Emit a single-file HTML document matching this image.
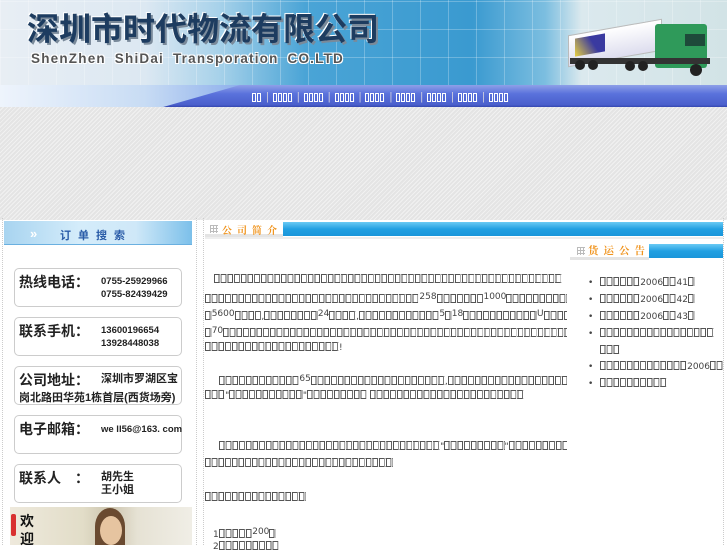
<!DOCTYPE html>
<html><head><meta charset="utf-8"><style>
*{margin:0;padding:0;box-sizing:border-box}
body{width:727px;height:545px;overflow:hidden;background:#fff;position:relative;font-family:"Liberation Sans","Noto Sans CJK SC",sans-serif}
.a{position:absolute}
.t{display:inline-block;height:9px;width:calc(var(--n)*6.7px);vertical-align:-1px;
background:linear-gradient(90deg,transparent 5.7px,#fff 5.7px) 0 0/6.7px 100% repeat-x,
linear-gradient(#555,#555) 0 0/100% 1px no-repeat,linear-gradient(#555,#555) 0 100%/100% 1px no-repeat,
repeating-linear-gradient(90deg,#555 0 1px,transparent 1px 4.7px,#555 4.7px 5.7px,transparent 5.7px 6.7px)}
.ln{position:absolute;left:205px;width:362px;overflow:hidden;white-space:nowrap;font-size:9px;color:#444;line-height:12px;font-family:"DejaVu Sans",sans-serif}
.ln span.d{font-size:9px;vertical-align:3px}
.rl{position:absolute;left:588px;width:135px;overflow:hidden;white-space:nowrap;font-size:9px;color:#444;line-height:12px;font-family:"DejaVu Sans",sans-serif}
.rl b{display:inline-block;width:12px;font-weight:normal}
.nv{display:inline-block;height:9px;width:calc(var(--n)*5px);margin:0 4px;vertical-align:middle;
background:linear-gradient(90deg,transparent 4px,#5570d8 4px) 0 0/5px 100% repeat-x,linear-gradient(#fff,#fff) 0 0/100% 1px no-repeat,linear-gradient(#fff,#fff) 0 100%/100% 1px no-repeat,repeating-linear-gradient(90deg,#fff 0 1px,transparent 1px 3px,#fff 3px 4px,transparent 4px 5px)}
.box{position:absolute;left:14px;width:168px;height:39px;border:1px solid #ccc;border-radius:5px;background:#fff}
.lb{position:absolute;left:4px;top:3px;font-size:14px;color:#222;font-weight:bold}
.vl{position:absolute;left:86px;top:6px;font-size:9.5px;font-weight:bold;color:#222;line-height:13px;white-space:nowrap}
</style></head><body>
<div class="a" style="left:0;top:0;width:727px;height:86px;background:linear-gradient(90deg,#e8eef4 0%,#dce8f2 20%,#a8d2ea 30%,#4aa4d6 42%,#3a9ad0 65%,#7cbee0 75%,#dbe9ee 80%,#d2e3e6 100%)"></div>
<div class="a" style="left:0;top:0;width:727px;height:86px;background:repeating-linear-gradient(90deg,rgba(255,255,255,.25) 0 1px,transparent 1px 28px),repeating-linear-gradient(0deg,rgba(255,255,255,.25) 0 1px,transparent 1px 28px)"></div>
<div class="a" style="left:27px;top:4px;font-size:32px;font-weight:bold;color:#1d3c60;text-shadow:2px 2px 0 #7a8a9a,-1px -1px 0 #fff;font-family:'Noto Sans CJK SC',sans-serif">深圳市时代物流有限公司</div>
<div class="a" style="left:31px;top:51px;font-size:13.5px;font-weight:bold;color:#555;letter-spacing:1.2px;word-spacing:4px;text-shadow:1px 1px 0 #fff,-1px -1px 0 #fff,1px -1px 0 #fff,-1px 1px 0 #fff">ShenZhen ShiDai Transporation CO.LTD</div>
<div class="a" style="left:568px;top:27px;width:94px;height:32px;background:linear-gradient(#fff,#dde);transform:skewY(-10deg);border:1px solid #bbb"></div>
<div class="a" style="left:575px;top:36px;width:30px;height:18px;background:linear-gradient(60deg,#e8d040,#3a3aa0 60%);transform:skewY(-10deg)"></div>
<div class="a" style="left:655px;top:24px;width:52px;height:44px;background:#2f9a5a;border-radius:3px"></div>
<div class="a" style="left:685px;top:34px;width:20px;height:12px;background:#1e4a3a"></div>
<div class="a" style="left:570px;top:58px;width:140px;height:6px;background:#333"></div>
<div class="a" style="left:575px;top:60px;width:10px;height:10px;border-radius:50%;background:#222"></div>
<div class="a" style="left:588px;top:60px;width:10px;height:10px;border-radius:50%;background:#222"></div>
<div class="a" style="left:625px;top:61px;width:10px;height:10px;border-radius:50%;background:#222"></div>
<div class="a" style="left:638px;top:61px;width:10px;height:10px;border-radius:50%;background:#222"></div>
<div class="a" style="left:690px;top:64px;width:12px;height:12px;border-radius:50%;background:#222"></div>
<div class="a" style="left:0;top:85px;width:727px;height:22px;background:linear-gradient(#8ea0e8,#5a72dc 40%,#4a5fcc 90%,#3446b0)"></div>
<div class="a" style="left:0;top:85px;width:240px;height:22px;background:linear-gradient(90deg,#eef4fc,#c8dcf4 60%,#8eb0ec);clip-path:polygon(0 0,100% 0,68% 100%,0 100%)"></div>
<div class="a" style="left:248px;top:91px;white-space:nowrap;color:#ccd;font-size:11px;line-height:12px"><span class="nv" style="--n:2"></span>|<span class="nv" style="--n:4"></span>|<span class="nv" style="--n:4"></span>|<span class="nv" style="--n:4"></span>|<span class="nv" style="--n:4"></span>|<span class="nv" style="--n:4"></span>|<span class="nv" style="--n:4"></span>|<span class="nv" style="--n:4"></span>|<span class="nv" style="--n:4"></span></div>
<div class="a" style="left:0;top:107px;width:727px;height:113px;background:#e9e9e9 repeating-linear-gradient(135deg,#e4e4e4 0 2px,#f1f1f1 2px 3px)"></div>
<div class="a" style="left:2px;top:218px;width:1px;height:327px;border-left:1px dotted #ccc"></div>
<div class="a" style="left:196px;top:218px;width:1px;height:327px;border-left:1px dotted #ccc"></div>
<div class="a" style="left:203px;top:218px;width:1px;height:327px;border-left:1px dotted #ccc"></div>
<div class="a" style="left:723px;top:218px;width:1px;height:327px;border-left:1px dotted #ccc"></div>
<div class="a" style="left:4px;top:221px;width:188px;height:24px;background:linear-gradient(90deg,#a8d4f0,#d4ecfa 40%,#cfe8f8 70%,#7cc0ea),#bfe0f5;border-bottom:1px solid #6ab0e0"></div>
<div class="a" style="left:30px;top:226px;font-size:13px;color:#fff;font-weight:bold">»</div>
<div class="a" style="left:60px;top:227px;font-size:11px;font-weight:bold;color:#2a5ca8;letter-spacing:7px">订单搜索</div>
<div class="box" style="top:268px"><div class="lb">热线电话：</div><div class="vl">0755-25929966<br>0755-82439429</div></div>
<div class="box" style="top:317px"><div class="lb">联系手机：</div><div class="vl">13600196654<br>13928448038</div></div>
<div class="box" style="top:366px"><div class="lb">公司地址：</div><div class="vl" style="font-size:11px">深圳市罗湖区宝</div><div class="a" style="left:4px;top:22px;font-size:11px;font-weight:bold;color:#222;white-space:nowrap">岗北路田华苑1栋首层(西货场旁)</div></div>
<div class="box" style="top:415px"><div class="lb">电子邮箱：</div><div class="vl" style="top:7px">we ll56@163. com</div></div>
<div class="box" style="top:464px"><div class="lb">联系人　：</div><div class="vl" style="font-size:11px">胡先生<br>王小姐</div></div>
<div class="a" style="left:10px;top:507px;width:182px;height:38px;background:linear-gradient(90deg,#eee9dc,#e2ddc8 40%,#ccc4ae 55%,#e6e2d4 70%,#f0eee6)"></div>
<div class="a" style="left:95px;top:508px;width:30px;height:37px;border-radius:50% 50% 0 0;background:#6a4a30"></div>
<div class="a" style="left:100px;top:516px;width:22px;height:29px;border-radius:50%;background:#e6c4a0"></div>
<div class="a" style="left:11px;top:514px;width:5px;height:22px;background:#d83030;border-radius:2px"></div>
<div class="a" style="left:20px;top:512px;font-size:14px;font-weight:bold;color:#111;line-height:18px">欢<br>迎</div>
<div class="a" style="left:205px;top:221px;width:78px;height:16px;background:#fff;border-bottom:3px solid #e4e4e4"></div>
<div class="a" style="left:210px;top:225px;width:8px;height:8px;background:repeating-linear-gradient(90deg,#bbb 0 1px,transparent 1px 3px),repeating-linear-gradient(#bbb 0 1px,#fff 1px 3px)"></div>
<div class="a" style="left:222px;top:222px;font-size:10px;font-weight:bold;color:#f0941e;letter-spacing:5px;font-family:'Noto Serif CJK SC',serif">公司简介</div>
<div class="a" style="left:283px;top:222px;width:440px;height:14px;background:linear-gradient(#6acaf4,#22a0e2 50%,#1a96da)"></div>
<div class="a" style="left:205px;top:237px;width:518px;height:2px;background:#eee"></div>
<div class="a" style="left:570px;top:243px;width:79px;height:17px;background:#fff;border-bottom:3px solid #e4e4e4"></div>
<div class="a" style="left:577px;top:247px;width:8px;height:8px;background:repeating-linear-gradient(90deg,#bbb 0 1px,transparent 1px 3px),repeating-linear-gradient(#bbb 0 1px,#fff 1px 3px)"></div>
<div class="a" style="left:588px;top:243px;font-size:10.5px;font-weight:bold;color:#f0941e;letter-spacing:5px;font-family:'Noto Serif CJK SC',serif">货运公告</div>
<div class="a" style="left:649px;top:244px;width:74px;height:14px;background:linear-gradient(#6acaf4,#22a0e2 50%,#1a96da)"></div>
<div class="ln" style="top:274px;left:214px;width:353px"><span class="t" style="--n:52"></span></div>
<div class="ln" style="top:291px"><span class="t" style="--n:32"></span><span class="d">258</span><span class="t" style="--n:7"></span><span class="d">1000</span><span class="t" style="--n:12"></span></div>
<div class="ln" style="top:308px"><span class="t" style="--n:1"></span><span class="d">5600</span><span class="t" style="--n:4"></span>,<span class="t" style="--n:8"></span><span class="d">24</span><span class="t" style="--n:4"></span>,<span class="t" style="--n:12"></span><span class="d">5</span><span class="t" style="--n:1"></span><span class="d">18</span><span class="t" style="--n:11"></span><span class="d">U</span><span class="t" style="--n:9"></span><span class="d">25</span><span class="t" style="--n:1"></span></div>
<div class="ln" style="top:325px"><span class="t" style="--n:1"></span><span class="d">70</span><span class="t" style="--n:52"></span></div>
<div class="ln" style="top:342px"><span class="t" style="--n:20"></span>!</div>
<div class="ln" style="top:373px;left:219px;width:348px"><span class="t" style="--n:12"></span><span class="d">65</span><span class="t" style="--n:20"></span>,<span class="t" style="--n:30"></span></div>
<div class="ln" style="top:390px"><span class="t" style="--n:3"></span>"<span class="t" style="--n:11"></span>"<span class="t" style="--n:9"></span> <span class="t" style="--n:23"></span></div>
<div class="ln" style="top:441px;left:219px;width:348px"><span class="t" style="--n:33"></span>"<span class="t" style="--n:9"></span>"<span class="t" style="--n:23"></span></div>
<div class="ln" style="top:458px"><span class="t" style="--n:28"></span></div>
<div class="ln" style="top:492px"><span class="t" style="--n:15"></span></div>
<div class="ln" style="top:526px;left:213px">1<span class="t" style="--n:5"></span><span class="d">200</span><span class="t" style="--n:1"></span></div>
<div class="ln" style="top:541px;left:213px">2<span class="t" style="--n:9"></span></div>
<div class="rl" style="top:277px"><b>•</b><span class="t" style="--n:6"></span>2006<span class="t" style="--n:2"></span>41<span class="t" style="--n:1"></span></div>
<div class="rl" style="top:294px"><b>•</b><span class="t" style="--n:6"></span>2006<span class="t" style="--n:2"></span>42<span class="t" style="--n:1"></span></div>
<div class="rl" style="top:311px"><b>•</b><span class="t" style="--n:6"></span>2006<span class="t" style="--n:2"></span>43<span class="t" style="--n:1"></span></div>
<div class="rl" style="top:328px"><b>•</b><span class="t" style="--n:17"></span></div>
<div class="rl" style="top:345px"><b></b><span class="t" style="--n:3"></span></div>
<div class="rl" style="top:361px"><b>•</b><span class="t" style="--n:13"></span>2006<span class="t" style="--n:2"></span>53<span class="t" style="--n:1"></span></div>
<div class="rl" style="top:378px"><b>•</b><span class="t" style="--n:10"></span></div>
</body></html>
